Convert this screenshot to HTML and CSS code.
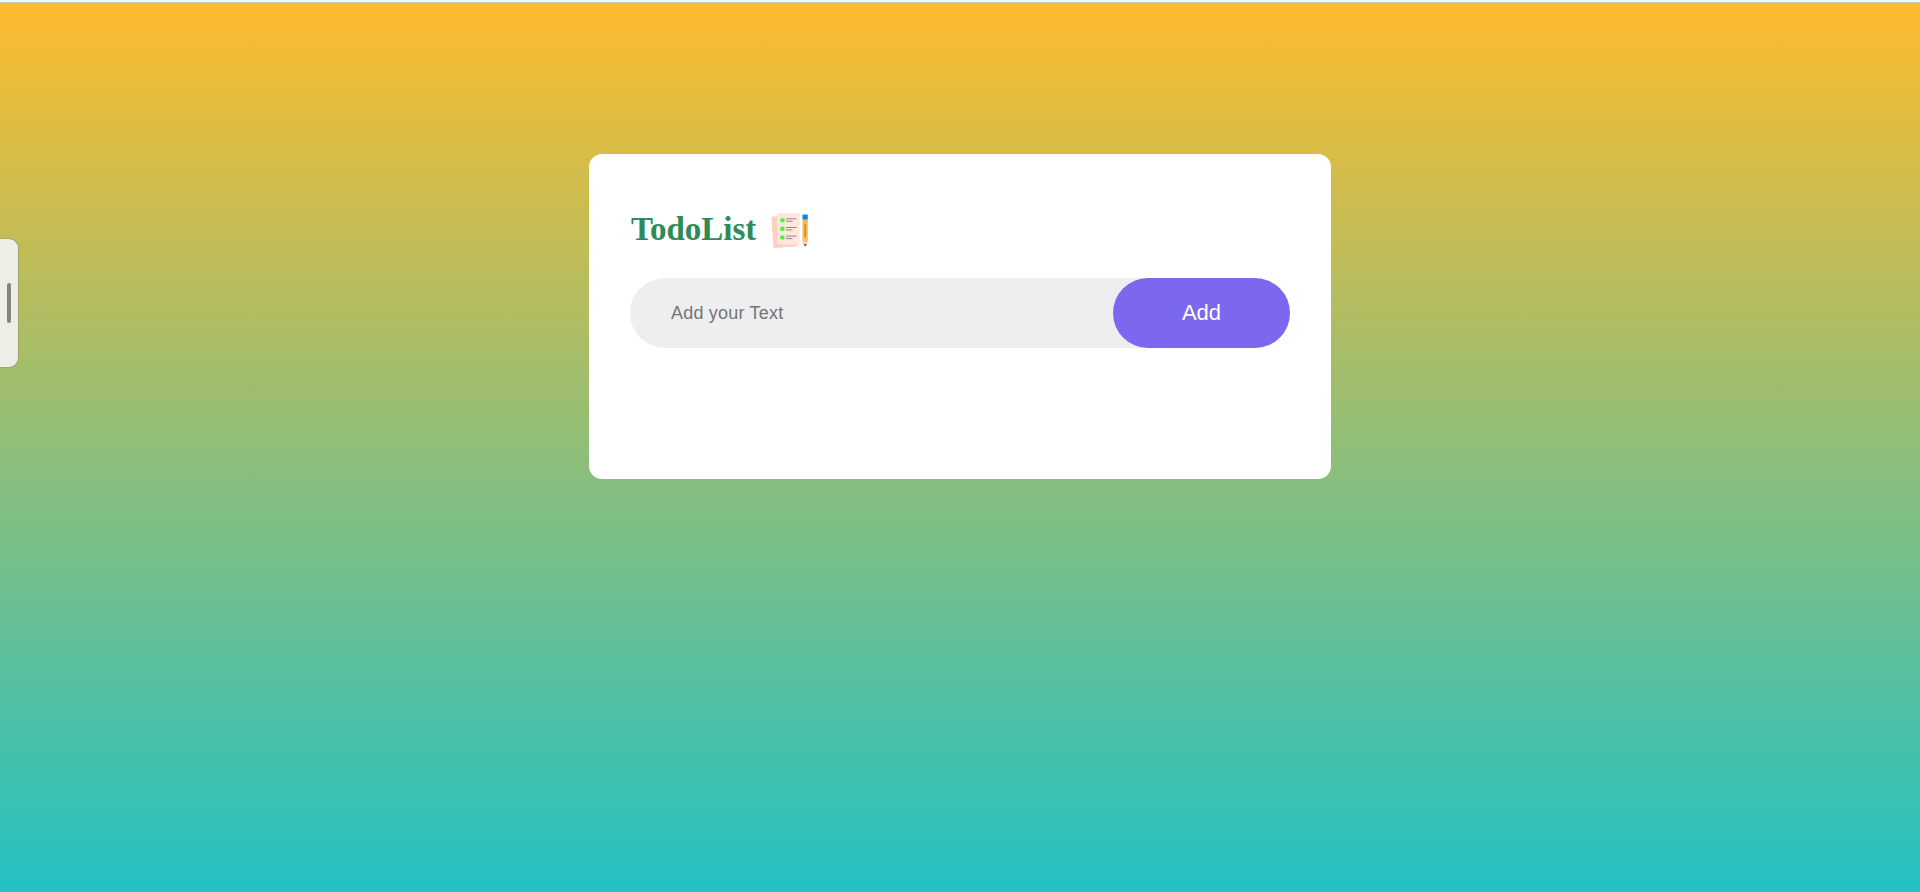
FILE: index.html
```html
<!DOCTYPE html>
<html lang="en">
<head>
<meta charset="utf-8">
<title>TodoList</title>
<link rel="stylesheet" href="styles.css">
</head>
<body>
<main class="container">
  <section class="todo-app">
    <h2 class="title"><span class="title-text">TodoList</span>
      <svg class="title-icon" viewBox="0 0 38 36" aria-hidden="true">
        <path fill="#ffd0c2" d="M.5 5Q.4 3.5 2 3.4L24 2.3 26.3 32Q26.4 33.4 25 33.5L4 35Q2.4 35.1 2.3 33.5Z"/>
        <rect x="6" y=".3" width="22.7" height="31.2" rx="1.6" fill="#ffe7dc"/>
        <g fill="#3dfc32"><circle cx="11.4" cy="7.2" r="2.3"/><circle cx="11.4" cy="15.8" r="2.3"/><circle cx="11.4" cy="24.5" r="2.3"/></g>
        <path stroke="#96809c" stroke-width="1" d="M15 5.8H25.5M15 14.5H25.5M15 23.1H25.5M15 8.2H21.5M15 16.9H21.5M15 25.6H21.5"/>
        <path fill="#ffb84d" d="M31.5 6h5.3v22.6h-5.3z"/>
        <rect x="31.5" y="1.4" width="5.3" height="5" rx=".7" fill="#0087ff"/>
        <path stroke="#a5702d" d="M34.2 11.5V24"/>
        <path fill="#ffc4cb" d="M31.5 28.4h5.3L35.5 32h-2.7z"/>
        <path fill="#40363a" d="M32.8 31.2h2.7l-1.3 2.5z"/>
      </svg>
    </h2>
    <div class="row">
      <input class="task-input" type="text" placeholder="Add your Text">
      <button class="add-button">Add</button>
    </div>
  </section>
</main>
<div class="side-handle"><span class="grip"></span></div>
</body>
</html>
```
FILE: styles.css
```css
* {
  box-sizing: border-box;
  margin: 0;
  padding: 0;
}

body {
  height: 892px;
  overflow: hidden;
  border-top: 2px solid #f6f6f9;
}

.container {
  height: 890px;
  padding-top: 151px;
  border-top: 1px solid #cbc5bd;
  background: linear-gradient(to top, #22c1c3, #fdbb2d);
}

.todo-app {
  width: 742px;
  height: 325px;
  margin: 0 auto;
  padding: 56px 41px 0;
  border-radius: 13px;
  background: #fff;
}

.title {
  display: flex;
  align-items: center;
  height: 42px;
  margin-bottom: 26px;
  color: #2e8b57;
  font: bold 33px "Liberation Serif", serif;
}

.title-text {
  padding: 0 0 3px 1px;
}

.title-icon {
  width: 38px;
  height: 36px;
  margin-left: 15px;
}

.row {
  display: flex;
  height: 70px;
  border-radius: 35px;
  background: #edeef0;
}

.task-input {
  flex: 1;
  min-width: 0;
  padding-left: 41px;
  border: 0;
  outline: 0;
  background: transparent;
  font: 18px "Liberation Sans", sans-serif;
  letter-spacing: 0.2px;
}

.task-input::placeholder {
  color: #757575;
}

.add-button {
  width: 177px;
  border: 0;
  border-radius: 35px;
  background: #7b68ee;
  color: #fff;
  font: 22px "Liberation Sans", sans-serif;
}

.side-handle {
  position: absolute;
  top: 238px;
  left: 0;
  display: flex;
  align-items: center;
  justify-content: flex-end;
  width: 19px;
  height: 130px;
  padding-right: 7px;
  border: 1px solid #a0a46b;
  border-left: 0;
  border-radius: 0 10px 10px 0;
  background: #edeee5;
}

.grip {
  width: 4px;
  height: 40px;
  border-radius: 2px;
  background: #83847f;
}
```
